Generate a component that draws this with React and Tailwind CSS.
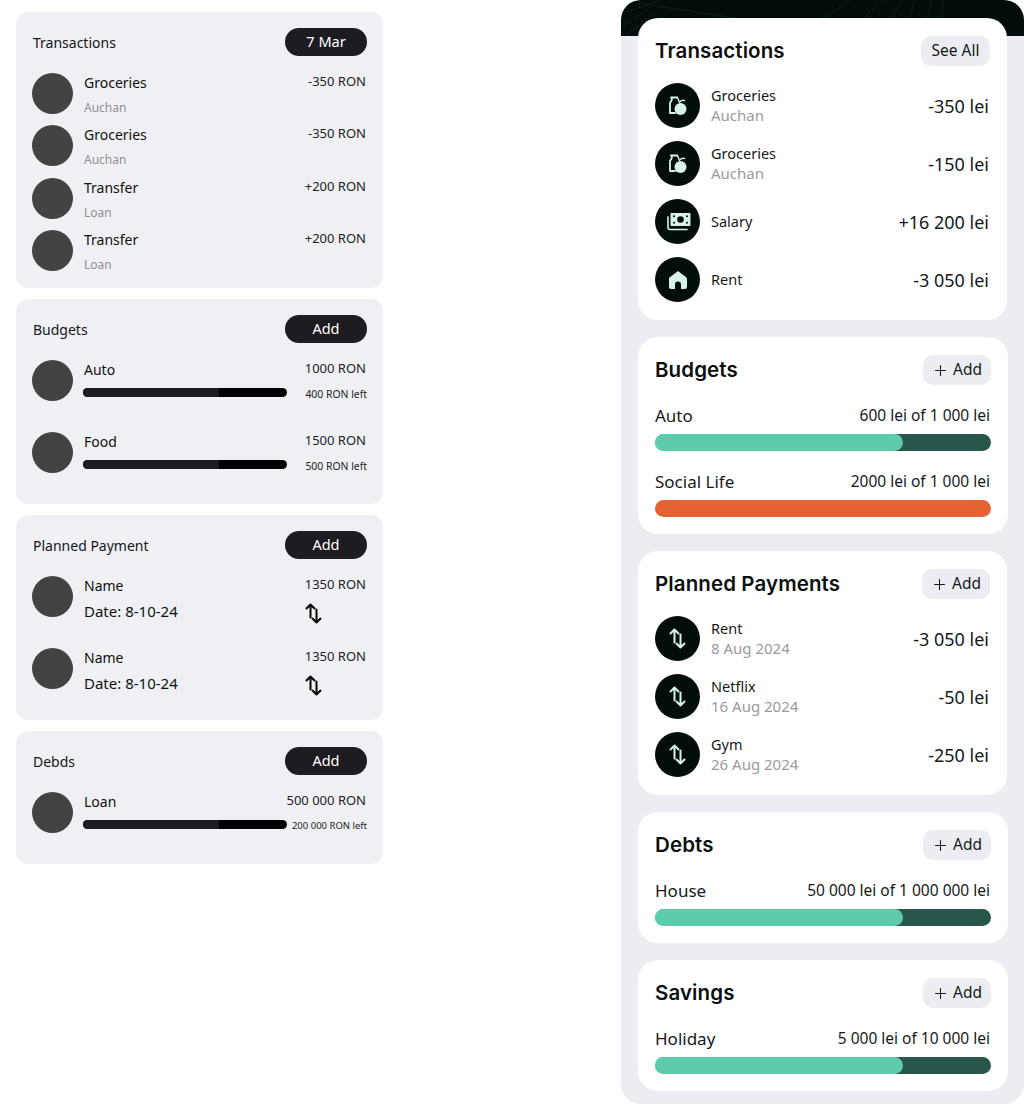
import { Plus } from "lucide-react";

const titleFont = "font-['Inter',sans-serif] font-semibold text-[20.500px] tracking-[0.1px] text-[#0b0f0e]";

function SwapIcon({ color }) {
  return (
    <svg viewBox="0 0 17 21" className="w-[17px] h-[21px]" fill="none" stroke={color} strokeWidth="2" strokeLinecap="round" strokeLinejoin="round">
      <path d="M5.500 14.500V1.500M1.500 5.500l4-4 4 4" />
      <path d="M11.500 6.500v13M7.500 15.500l4 4 4-4" />
    </svg>
  );
}

function GroceryIcon() {
  return (
    <svg viewBox="0 0 24 24" className="w-[24px] h-[24px]" fill="none">
      <path d="M5 3.500h6M5.800 3.500v2.500L4 9v10h5" stroke="#d8f3ea" strokeWidth="1.800" strokeLinecap="round" strokeLinejoin="round" />
      <path d="M11.500 3.500 13.500 8.500" stroke="#d8f3ea" strokeWidth="1.400" strokeLinecap="round" />
      <path d="M14.500 7.500c1-1.500 2.500-1.500 4-1" stroke="#d8f3ea" strokeWidth="1.400" strokeLinecap="round" />
      <circle cx="14.500" cy="15" r="6" fill="#d8f3ea" />
    </svg>
  );
}

function CashIcon() {
  return (
    <svg viewBox="0 0 26 24" className="w-[26px] h-[24px]" fill="none">
      <path d="M6 3.500h19v12H6z" fill="#d8f3ea" stroke="#d8f3ea" strokeLinejoin="round" />
      <circle cx="15.500" cy="9.500" r="3.300" fill="#030d0b" />
      <circle cx="9" cy="6.300" r="1" fill="#030d0b" />
      <circle cx="22" cy="6.300" r="1" fill="#030d0b" />
      <circle cx="9" cy="12.700" r="1" fill="#030d0b" />
      <circle cx="22" cy="12.700" r="1" fill="#030d0b" />
      <path d="M3 7v10.500a2 2 0 0 0 2 2h17" stroke="#d8f3ea" strokeWidth="1.600" strokeLinecap="round" />
    </svg>
  );
}

function HomeIcon() {
  return (
    <svg viewBox="0 0 24 24" className="w-[24px] h-[24px]">
      <path
        fill="#d8f3ea"
        d="M12 3 20.200 9.300A2 2 0 0 1 21 10.900V19a2 2 0 0 1-2 2h-4v-4.500a3 3 0 0 0-6 0V21H5a2 2 0 0 1-2-2v-8.100a2 2 0 0 1 .8-1.600z"
      />
    </svg>
  );
}

function RoundIcon({ children }) {
  return (
    <div className="w-[45px] h-[45px] rounded-full bg-[#030d0b] flex items-center justify-center shrink-0">
      {children}
    </div>
  );
}

function Avatar() {
  return <div className="w-[41px] h-[41px] rounded-full bg-[#434343] shrink-0" />;
}

function Pill({ label }) {
  return (
    <div className="w-[82px] h-[28px] rounded-full bg-[#1c1c21] text-white text-[14.500px] flex items-center justify-center">
      {label}
    </div>
  );
}

function WireCard({ title, action, className, children }) {
  return (
    <section className={`bg-[#eff0f4] rounded-[12px] pt-[16px] px-[16px] ${className}`}>
      <div className="flex items-center justify-between h-[28px] mb-[17px]">
        <h2 className="text-[14px] text-[#16161a] ml-[1px]">{title}</h2>
        <Pill label={action} />
      </div>
      {children}
    </section>
  );
}

function WireTransaction({ name, sub, amount }) {
  return (
    <div className="flex gap-[10px] h-[41px]">
      <Avatar />
      <div className="flex-1 flex justify-between">
        <div className="ml-[1px]">
          <p className="text-[14px] leading-[20px] text-[#111]">{name}</p>
          <p className="text-[12px] leading-[16px] mt-[7px] text-[#8f8f96]">{sub}</p>
        </div>
        <p className="text-[13px] leading-[17px] text-[#222] mr-[1px]">{amount}</p>
      </div>
    </div>
  );
}

function WireBudget({ name, amount, left, smallLeft = false }) {
  return (
    <div className="flex gap-[10px] h-[41px]">
      <Avatar />
      <div className="flex-1">
        <div className="flex justify-between h-[20px]">
          <p className="text-[14px] leading-[20px] text-[#111] ml-[1px]">{name}</p>
          <p className="text-[13px] leading-[17px] text-[#222] mr-[1px]">{amount}</p>
        </div>
        <div className="flex items-start justify-between mt-[8px]">
          <div className="w-[204px] h-[9px] rounded-full bg-black overflow-hidden">
            <div className="w-[136px] h-full bg-[#1c1c21]" />
          </div>
          <p className={`leading-[12px] text-[#222] whitespace-nowrap ${smallLeft ? "text-[9.500px]" : "text-[10.400px]"}`}>{left}</p>
        </div>
      </div>
    </div>
  );
}

function WirePlanned() {
  return (
    <div className="flex gap-[10px] h-[41px]">
      <Avatar />
      <div className="flex-1 flex justify-between">
        <div className="ml-[1px]">
          <p className="text-[14px] leading-[20px] text-[#111]">Name</p>
          <p className="text-[15px] leading-[20px] mt-[5px] text-[#111]">Date: 8-10-24</p>
        </div>
        <div className="flex flex-col items-end w-[62px]">
          <p className="text-[13px] leading-[17px] text-[#222] whitespace-nowrap mr-[1px]">1350 RON</p>
          <div className="self-start mt-[10px]">
            <SwapIcon color="#000" />
          </div>
        </div>
      </div>
    </div>
  );
}

function AddButton({ label = "Add", plus = true, className = "" }) {
  return (
    <div className={`h-[30px] rounded-[10px] bg-[#ecedf3] flex items-center justify-center gap-[4px] text-[15.500px] text-[#15191a] ${className}`}>
      {plus && <Plus size={17} strokeWidth={1.500} />}
      {label}
    </div>
  );
}

function Card({ title, button, className = "w-[369px]", children }) {
  return (
    <section className={`bg-white rounded-[20px] pt-[18px] px-[17px] ${className}`}>
      <div className="flex items-center justify-between h-[30px]">
        <h2 className={titleFont}>{title}</h2>
        {button}
      </div>
      {children}
    </section>
  );
}

function Row({ icon, name, sub, amount }) {
  return (
    <div className="flex items-center h-[45px]">
      <RoundIcon>{icon}</RoundIcon>
      <div className="ml-[11px] flex-1 -mt-[2px]">
        <p className="text-[14.500px] leading-[20px] text-[#15191a]">{name}</p>
        {sub && <p className="text-[15px] leading-[20px] text-[#9a9a9f]">{sub}</p>}
      </div>
      <p className="text-[18px] text-[#15191a] mr-[1px] mt-[2px]">{amount}</p>
    </div>
  );
}

function Progress({ label, value, over = false, className = "mt-[19px]" }) {
  return (
    <div className={className}>
      <div className="flex items-center justify-between h-[24px] pr-[1px]">
        <span className="text-[17px] text-[#15191a]">{label}</span>
        <span className="text-[15.500px] text-[#15191a]">{value}</span>
      </div>
      {over ? (
        <div className="mt-[6px] w-[336px] h-[17px] rounded-full bg-[#e56333]" />
      ) : (
        <div className="mt-[6px] w-[336px] h-[17px] rounded-full bg-[linear-gradient(90deg,#5ecbaa_50%,#28564a_50%)]">
          <div className="w-[248px] h-full rounded-full bg-[#5ecbaa]" />
        </div>
      )}
    </div>
  );
}

export default function App() {
  return (
    <div className="w-[1024px] h-[1105px] bg-white flex justify-between overflow-hidden font-['Noto_Sans',sans-serif]">
      {/* Wireframe column */}
      <div className="w-[367px] ml-[16px] pt-[12px] flex flex-col gap-[11px]">
        <WireCard title="Transactions" action="7 Mar" className="h-[276px]">
          <div className="flex flex-col gap-[11.400px]">
            <WireTransaction name="Groceries" sub="Auchan" amount="-350 RON" />
            <WireTransaction name="Groceries" sub="Auchan" amount="-350 RON" />
            <WireTransaction name="Transfer" sub="Loan" amount="+200 RON" />
            <WireTransaction name="Transfer" sub="Loan" amount="+200 RON" />
          </div>
        </WireCard>
        <WireCard title="Budgets" action="Add" className="h-[205px]">
          <div className="flex flex-col gap-[31px]">
            <WireBudget name="Auto" amount="1000 RON" left="400 RON left" />
            <WireBudget name="Food" amount="1500 RON" left="500 RON left" />
          </div>
        </WireCard>
        <WireCard title="Planned Payment" action="Add" className="h-[205px]">
          <div className="flex flex-col gap-[31px]">
            <WirePlanned />
            <WirePlanned />
          </div>
        </WireCard>
        <WireCard title="Debds" action="Add" className="h-[133px]">
          <WireBudget name="Loan" amount="500 000 RON" left="200 000 RON left" smallLeft />
        </WireCard>
      </div>

      {/* Final design column */}
      <div className="w-[403px] h-[1104px] bg-[#ecedf3] rounded-[20px] overflow-hidden">
        <div className="h-[36px] bg-[#030d0b] overflow-hidden">
          <svg viewBox="0 0 403 36" className="w-[403px] h-[36px]" fill="none" stroke="#1b2523" strokeWidth="0.700">
            <path d="M0 14 40 0M0 26 28 9M4 36 32 14M0 20 20 28M16 3 140 22c40 6 60 2 88-22M224 36 262 0M258 36 282 0M282 36 294 0M303 36 310 0M320 36 322 0" />
          </svg>
        </div>
        <div className="-mt-[18px] pl-[17px] flex flex-col gap-[17px]">
          <Card title="Transactions" button={<AddButton label="See All" plus={false} className="w-[69px]" />} className="w-[369px] pb-[18px]">
            <div className="mt-[17px] flex flex-col gap-[13px]">
              <Row icon={<GroceryIcon />} name="Groceries" sub="Auchan" amount="-350 lei" />
              <Row icon={<GroceryIcon />} name="Groceries" sub="Auchan" amount="-150 lei" />
              <Row icon={<CashIcon />} name="Salary" amount="+16 200 lei" />
              <Row icon={<HomeIcon />} name="Rent" amount="-3 050 lei" />
            </div>
          </Card>
          <Card title="Budgets" button={<AddButton className="w-[68px]" />} className="w-[370px] pb-[17px]">
            <Progress label="Auto" value="600 lei of 1 000 lei" />
            <Progress label="Social Life" value="2000 lei of 1 000 lei" over />
          </Card>
          <Card title="Planned Payments" button={<AddButton className="w-[68px]" />} className="w-[369px] pb-[18px]">
            <div className="mt-[17px] flex flex-col gap-[13px]">
              <Row icon={<SwapIcon color="#d8f3ea" />} name="Rent" sub="8 Aug 2024" amount="-3 050 lei" />
              <Row icon={<SwapIcon color="#d8f3ea" />} name="Netflix" sub="16 Aug 2024" amount="-50 lei" />
              <Row icon={<SwapIcon color="#d8f3ea" />} name="Gym" sub="26 Aug 2024" amount="-250 lei" />
            </div>
          </Card>
          <Card title="Debts" button={<AddButton className="w-[68px]" />} className="w-[370px] pb-[17px]">
            <Progress label="House" value="50 000 lei of 1 000 000 lei" />
          </Card>
          <Card title="Savings" button={<AddButton className="w-[68px]" />} className="w-[370px] pb-[17px]">
            <Progress label="Holiday" value="5 000 lei of 10 000 lei" />
          </Card>
        </div>
      </div>
    </div>
  );
}
